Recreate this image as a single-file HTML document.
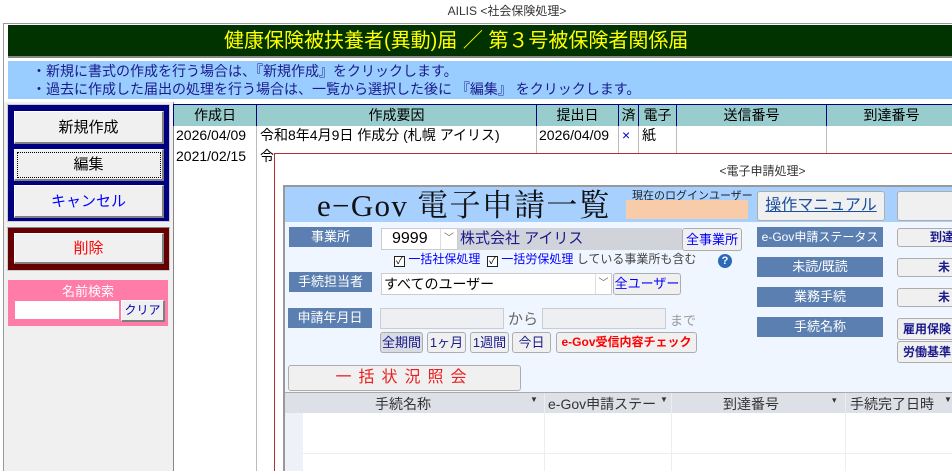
<!DOCTYPE html><html><head><meta charset="utf-8"><style>
*{margin:0;padding:0;box-sizing:border-box}
body{width:952px;height:471px;overflow:hidden;background:#fff;font-family:"Liberation Sans","Noto Sans CJK JP",sans-serif;position:relative;font-size:13px;color:#000}
.a{position:absolute;white-space:nowrap}
.btn{position:absolute;background:#f0f0f0;border:1px solid #fff;border-right:2px solid #808080;border-bottom:2px solid #808080;text-align:center}
.rb{position:absolute;background:#f0f0f0;border:1px solid #adadad;border-radius:3px;text-align:center;font-size:13px;white-space:nowrap;overflow:hidden}
.lab{position:absolute;background:#5b7fb0;color:#fff;text-align:center;font-size:13px;line-height:20px;white-space:nowrap;overflow:hidden}
.c{text-align:center}
.th{position:absolute;top:0;height:21px;line-height:20px;text-align:center;border-right:1px solid #000080;font-size:14px}
.td{position:absolute;font-size:14px;line-height:21px;white-space:nowrap}
</style></head><body>
<div class="a" style="left:0;top:2px;width:1014px;text-align:center;font-size:12px;color:#333">AILIS &lt;社会保険処理&gt;</div>
<div class="a" style="left:3px;top:23px;width:949px;height:448px;border-top:1px solid #999;border-left:1px solid #999"></div>
<div class="a" style="left:8px;top:25px;width:944px;height:33px;background:#003300;border-bottom:2px solid #888;color:#ffff00;font-size:20px;line-height:32px;padding-left:216px">健康保険被扶養者(異動)届 ／ 第３号被保険者関係届</div>
<div class="a" style="left:8px;top:61px;width:944px;height:38px;background:#99ccff;color:#1a1a8c;font-size:14px;line-height:18px;padding:1px 0 0 24px">・新規に書式の作成を行う場合は、『新規作成』をクリックします。<br>・過去に作成した届出の処理を行う場合は、一覧から選択した後に 『編集』 をクリックします。</div>
<!-- left panel -->
<div class="a" style="left:4px;top:102px;width:170px;height:369px;background:#f0f0f0;border-right:1px solid #888"></div>
<div class="a" style="left:7px;top:104px;width:163px;height:118px;background:#000080;border:1px solid #ccc"></div>
<div class="btn" style="left:14px;top:111px;width:150px;height:33px;line-height:31px;font-size:15px">新規作成</div>
<div class="btn" style="left:14px;top:149px;width:150px;height:32px;line-height:30px;font-size:15px;outline:1px dotted #000;outline-offset:-4px">編集</div>
<div class="btn" style="left:14px;top:185px;width:150px;height:33px;line-height:31px;font-size:15px;color:#0000ff">キャンセル</div>
<div class="a" style="left:7px;top:227px;width:163px;height:44px;background:#660000;border:1px solid #ccc;border-top-color:#888"></div>
<div class="btn" style="left:14px;top:233px;width:150px;height:31px;line-height:29px;font-size:15px;color:#ff0000">削除</div>
<div class="a" style="left:8px;top:280px;width:160px;height:46px;background:#ff7ba8"></div>
<div class="a c" style="left:8px;top:281px;width:160px;color:#fff;font-size:13px">名前検索</div>
<div class="a" style="left:15px;top:301px;width:104px;height:18px;background:#fff"></div>
<div class="btn" style="left:121px;top:300px;width:44px;height:22px;line-height:19px;font-size:12px;color:#0000aa">クリア</div>
<!-- table -->
<div class="a" style="left:173px;top:104px;width:779px;height:22px;background:#99cccc;border-top:1px solid #000080;border-left:1px solid #000080">
<div class="th" style="left:0;width:83px">作成日</div>
<div class="th" style="left:83px;width:280px">作成要因</div>
<div class="th" style="left:363px;width:82px">提出日</div>
<div class="th" style="left:445px;width:20px">済</div>
<div class="th" style="left:465px;width:38px">電子</div>
<div class="th" style="left:503px;width:150px">送信番号</div>
<div class="th" style="left:653px;width:130px">到達番号</div>
</div>
<div class="a" style="left:256px;top:126px;width:1px;height:345px;background:#bbb"></div>
<div class="a" style="left:536px;top:126px;width:1px;height:28px;background:#bbb"></div>
<div class="a" style="left:618px;top:126px;width:1px;height:28px;background:#bbb"></div>
<div class="a" style="left:638px;top:126px;width:1px;height:28px;background:#bbb"></div>
<div class="a" style="left:676px;top:126px;width:1px;height:28px;background:#bbb"></div>
<div class="a" style="left:826px;top:126px;width:1px;height:28px;background:#bbb"></div>
<div class="td" style="left:176px;top:125px">2026/04/09</div>
<div class="td" style="left:260px;top:125px">令和8年4月9日 作成分 (札幌 アイリス)</div>
<div class="td" style="left:539px;top:125px">2026/04/09</div>
<div class="td" style="left:622px;top:125px;color:#0000cc">×</div>
<div class="td" style="left:642px;top:125px">紙</div>
<div class="td" style="left:176px;top:146px">2021/02/15</div>
<div class="td" style="left:260px;top:146px">令</div>
<!-- overlay -->
<div class="a" style="left:274px;top:153px;width:678px;height:318px;background:#fff;border-left:1px solid #b03030;border-top:1px solid #b03030"></div>
<div class="a c" style="left:640px;top:162px;width:245px;font-size:12px;color:#333">&lt;電子申請処理&gt;</div>
<div class="a" style="left:283px;top:185px;width:669px;height:286px;background:#f0f6ff;border-left:2px solid #999;border-top:2px solid #999"></div>
<div class="a" style="left:285px;top:187px;width:667px;height:35px;background:#a8d0ff"></div>
<div class="a" style="left:317px;top:186px;font-family:'Liberation Serif','Noto Serif CJK SC',serif;font-size:31px;line-height:40px;color:#111;letter-spacing:1.3px">e&#8722;Gov 電子申請一覧</div>
<div class="a" style="left:632px;top:187px;font-size:11px;color:#222">現在のログインユーザー</div>
<div class="a" style="left:626px;top:200px;width:122px;height:19px;background:#f8cca8"></div>
<div class="rb" style="left:757px;top:191px;width:128px;height:30px;line-height:28px;font-size:16px;color:#1a4fa0;text-decoration:underline">操作マニュアル</div>
<div class="rb" style="left:897px;top:191px;width:60px;height:30px"></div>
<div class="lab" style="left:289px;top:227px;width:83px">事業所</div>
<div class="a" style="left:381px;top:228px;width:77px;height:22px;background:#fff;border:1px solid #ccc;font-size:16px;line-height:20px;padding-left:10px">9999</div>
<div class="a" style="left:440px;top:229px;width:17px;height:20px;border-left:1px solid #ddd;font-size:10px;color:#666;line-height:20px;text-align:center">﹀</div>
<div class="a" style="left:458px;top:228px;width:224px;height:22px;background:#d0d3d9;font-size:15px;line-height:22px;padding-left:2px;color:#1a1a8c">株式会社 アイリス</div>
<div class="rb" style="left:682px;top:228px;width:60px;height:23px;line-height:21px;color:#0000ff">全事業所</div>
<div class="a" style="left:394px;top:251px;font-size:12px;color:#0000ff;line-height:16px"><span style="display:inline-block;width:11px;height:11px;border:1px solid #222;background:#fff;color:#000;font-size:10px;line-height:9px;text-align:center;vertical-align:-1px">✓</span> 一括社保処理 &nbsp;<span style="display:inline-block;width:11px;height:11px;border:1px solid #222;background:#fff;color:#000;font-size:10px;line-height:9px;text-align:center;vertical-align:-1px">✓</span> 一括労保処理 <span style="color:#444">している事業所も含む</span></div>
<div class="a" style="left:718px;top:254px;width:14px;height:14px;border-radius:50%;background:#2a6ab8;color:#fff;font-size:11px;font-weight:bold;line-height:14px;text-align:center">?</div>
<div class="lab" style="left:289px;top:272px;width:83px">手続担当者</div>
<div class="a" style="left:381px;top:273px;width:231px;height:22px;background:#fff;border:1px solid #ccc;font-size:14px;line-height:20px;padding-left:2px">すべてのユーザー</div>
<div class="a" style="left:595px;top:274px;width:16px;height:20px;border-left:1px solid #ddd;font-size:10px;color:#666;line-height:20px;text-align:center">﹀</div>
<div class="rb" style="left:613px;top:273px;width:68px;height:22px;line-height:20px;color:#0000ff">全ユーザー</div>
<div class="lab" style="left:288px;top:308px;width:84px">申請年月日</div>
<div class="a" style="left:380px;top:308px;width:124px;height:21px;background:#eeeff2;border:1px solid #ccc"></div>
<div class="a" style="left:508px;top:308px;font-size:15px;color:#666">から</div>
<div class="a" style="left:542px;top:308px;width:124px;height:21px;background:#eeeff2;border:1px solid #ccc"></div>
<div class="a" style="left:670px;top:310px;font-size:13px;color:#999">まで</div>
<div class="rb" style="left:380px;top:332px;width:43px;height:21px;line-height:19px;background:#d8dbe2;color:#1a1a8c">全期間</div>
<div class="rb" style="left:427px;top:332px;width:39px;height:21px;line-height:19px;color:#1a1a8c">1ヶ月</div>
<div class="rb" style="left:470px;top:332px;width:39px;height:21px;line-height:19px;color:#1a1a8c">1週間</div>
<div class="rb" style="left:512px;top:332px;width:39px;height:21px;line-height:19px;color:#1a1a8c">今日</div>
<div class="rb" style="left:556px;top:332px;width:141px;height:21px;line-height:19px;color:#ff0000;font-weight:bold;font-size:12px">e-Gov受信内容チェック</div>
<div class="rb" style="left:288px;top:365px;width:233px;height:26px;line-height:24px;color:#e82020;font-size:16px;letter-spacing:7px">一括状況照会</div>
<div class="lab" style="left:757px;top:227px;width:126px;font-size:12px">e-Gov申請ステータス</div>
<div class="lab" style="left:757px;top:257px;width:126px">未読/既読</div>
<div class="lab" style="left:757px;top:287px;width:126px">業務手続</div>
<div class="lab" style="left:757px;top:317px;width:126px">手続名称</div>
<div class="rb" style="left:897px;top:228px;width:60px;height:19px;line-height:17px;color:#1a1a8c;font-weight:bold;font-size:12px;text-align:left;padding-left:32px">到達</div>
<div class="rb" style="left:897px;top:258px;width:60px;height:19px;line-height:17px;color:#1a1a8c;font-weight:bold;font-size:12px;text-align:left;padding-left:40px">未</div>
<div class="rb" style="left:897px;top:288px;width:60px;height:19px;line-height:17px;color:#1a1a8c;font-weight:bold;font-size:12px;text-align:left;padding-left:40px">未</div>
<div class="rb" style="left:897px;top:318px;width:60px;height:22px;line-height:20px;color:#1a1a8c;font-weight:bold;font-size:12px;text-align:left;padding-left:5px">雇用保険</div>
<div class="rb" style="left:897px;top:341px;width:60px;height:22px;line-height:20px;color:#1a1a8c;font-weight:bold;font-size:12px;text-align:left;padding-left:5px">労働基準</div>
<!-- grid -->
<div class="a" style="left:285px;top:392px;width:667px;height:79px;background:#fff;border-top:1px solid #aaa"></div>
<div class="a" style="left:285px;top:393px;width:667px;height:20px;background:#dde0e6"></div>
<div class="a" style="left:285px;top:413px;width:18px;height:58px;background:#eef2f8"></div>
<div class="a" style="left:544px;top:393px;width:1px;height:78px;background:#eee"></div>
<div class="a" style="left:671px;top:393px;width:1px;height:78px;background:#eee"></div>
<div class="a" style="left:845px;top:393px;width:1px;height:78px;background:#eee"></div>
<div class="a" style="left:303px;top:453px;width:649px;height:1px;background:#eee"></div>
<div class="a c" style="left:303px;top:394px;width:200px;font-size:14px;color:#333">手続名称</div>
<div class="a" style="left:530px;top:395px;font-size:8px;color:#333">▼</div>
<div class="a" style="left:548px;top:394px;font-size:14px;color:#333">e-Gov申請ステー</div>
<div class="a" style="left:660px;top:395px;font-size:8px;color:#333">▼</div>
<div class="a c" style="left:671px;top:394px;width:160px;font-size:14px;color:#333">到達番号</div>
<div class="a" style="left:832px;top:395px;font-size:9px;color:#333">▾</div>
<div class="a" style="left:850px;top:394px;font-size:14px;color:#333">手続完了日時</div>
<div class="a" style="left:944px;top:395px;font-size:8px;color:#333">▼</div>
</body></html>
